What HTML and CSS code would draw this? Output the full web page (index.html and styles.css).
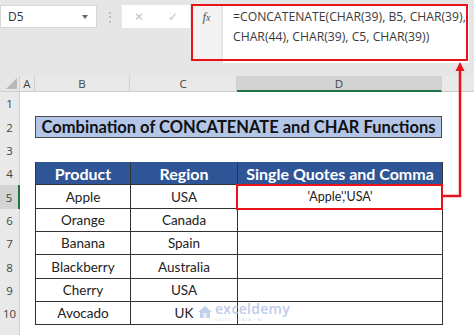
FILE: index.html
```html
<!DOCTYPE html>
<html lang="en">
<head>
    <meta charset="UTF-8">
    <title>CONCATENATE and CHAR</title>
    <link rel="stylesheet" href="styles.css">
</head>
<body>
    <div class="app">
        <div class="topbar">
            <div class="namebox">
                <span>D5</span>
                <span class="caret"></span>
            </div>
            <div class="grip">&#8942;</div>
            <div class="actions">
                <span class="act">&#10005;</span>
                <span class="act">&#10003;</span>
            </div>
            <div class="fx"><i>f</i><i class="x">x</i></div>
            <div class="formula">=CONCATENATE(CHAR(39), B5, CHAR(39),<br>CHAR(44), CHAR(39), C5, CHAR(39))</div>
            <div class="callout"></div>
        </div>

        <div class="sheet">
            <div class="corner"><span class="tri"></span></div>
            <div class="colhead">A</div>
            <div class="colhead">B</div>
            <div class="colhead">C</div>
            <div class="colhead sel">D</div>
            <div class="colhead last"></div>

            <div class="rowhead">1</div>
            <div class="blank span5"></div>

            <div class="rowhead">2</div>
            <div class="blank"></div>
            <div class="title">Combination of CONCATENATE and CHAR Functions</div>
            <div class="blank"></div>

            <div class="rowhead">3</div>
            <div class="blank span5"></div>

            <div class="rowhead">4</div>
            <div class="blank"></div>
            <div class="th">Product</div>
            <div class="th">Region</div>
            <div class="th">Single Quotes and Comma</div>
            <div class="blank"></div>

            <div class="rowhead sel">5</div>
            <div class="blank"></div>
            <div class="td">Apple</div>
            <div class="td">USA</div>
            <div class="td active">'Apple','USA'</div>
            <div class="blank"></div>

            <div class="rowhead">6</div>
            <div class="blank"></div>
            <div class="td">Orange</div>
            <div class="td">Canada</div>
            <div class="td"></div>
            <div class="blank"></div>

            <div class="rowhead">7</div>
            <div class="blank"></div>
            <div class="td">Banana</div>
            <div class="td">Spain</div>
            <div class="td"></div>
            <div class="blank"></div>

            <div class="rowhead">8</div>
            <div class="blank"></div>
            <div class="td">Blackberry</div>
            <div class="td">Australia</div>
            <div class="td"></div>
            <div class="blank"></div>

            <div class="rowhead">9</div>
            <div class="blank"></div>
            <div class="td">Cherry</div>
            <div class="td">USA</div>
            <div class="td"></div>
            <div class="blank"></div>

            <div class="rowhead">10</div>
            <div class="blank"></div>
            <div class="td">Avocado</div>
            <div class="td">UK</div>
            <div class="td"></div>
            <div class="blank"></div>

            <div class="rowhead"></div>
            <div class="blank span5"></div>
        </div>

        <svg class="arrow" width="474" height="335" viewBox="0 0 474 335">
            <polyline points="460,70 460,196 442,196" fill="none" stroke="#e8121a" stroke-width="2.5"/>
            <polygon points="460,62 455.5,71 464.5,71" fill="#e8121a"/>
        </svg>

        <div class="watermark">
            <svg width="16" height="14" viewBox="0 0 16 14">
                <path d="M1 7 L8 1 L15 7 L13 7 L13 13 L3 13 L3 7 Z" fill="#b9c8e8"/>
                <rect x="6" y="8" width="4" height="5" fill="#dfe7f5"/>
            </svg>
            <div class="wm-text">
                <span class="wm-name">exceldemy</span>
                <span class="wm-tag">EXCEL · DATA · BI</span>
            </div>
        </div>
    </div>
</body>
</html>
```

FILE: styles.css
```css
body {
    margin: 0;
    padding: 0;
    background: #ffffff;
    font-family: Lato, "Open Sans", sans-serif;
    overflow: hidden;
}
.app {
    width: 474px;
    height: 335px;
    position: relative;
    overflow: hidden;
}
.topbar {
    height: 76px;
    background: #e6e6e6;
    display: flex;
    align-items: flex-start;
    padding-top: 5px;
    box-sizing: border-box;
    position: relative;
}
.namebox {
    width: 97px;
    height: 23px;
    background: #ffffff;
    border: 1px solid #d6d6d6;
    box-sizing: border-box;
    display: flex;
    align-items: center;
    justify-content: space-between;
    padding: 0 8px 0 7px;
    font-family: "Open Sans", sans-serif;
    font-size: 12px;
    color: #333;
}
.caret {
    width: 0;
    height: 0;
    border-left: 3.5px solid transparent;
    border-right: 3.5px solid transparent;
    border-top: 4px solid #666;
}
.grip {
    width: 25px;
    text-align: center;
    color: #a9a9a9;
    font-size: 12px;
    line-height: 23px;
}
.actions {
    width: 68px;
    height: 23px;
    background: #ffffff;
    display: flex;
    align-items: center;
    justify-content: space-around;
    color: #c4c4c4;
    font-size: 12px;
}
.fx {
    margin-left: 2px;
    width: 29px;
    height: 56px;
    background: #f3f3f3;
    font-family: "Liberation Serif", serif;
    font-size: 13px;
    color: #555;
    text-align: center;
    padding-top: 4px;
    box-sizing: border-box;
}
.fx .x {
    font-size: 10px;
}
.formula {
    margin-left: 2px;
    flex: 1;
    margin-right: 5px;
    height: 58px;
    background: #ffffff;
    font-family: "Open Sans", sans-serif;
    font-size: 12.2px;
    line-height: 20px;
    color: #3b3b3b;
    padding: 2px 0 0 10px;
    box-sizing: border-box;
    white-space: nowrap;
}
.callout {
    position: absolute;
    left: 191px;
    top: 4px;
    width: 277px;
    height: 57px;
    border: 2.5px solid #e8121a;
    box-sizing: border-box;
}
.sheet {
    display: grid;
    grid-template-columns: 20px 15px 95px 107px 205px 1fr;
    grid-template-rows: 16px repeat(10, 23.35px) 1fr;
    height: 259px;
    font-family: Lato, "Open Sans", sans-serif;
}
.corner {
    background: #e6e6e6;
    border-right: 1px solid #cfcfcf;
    border-bottom: 1px solid #cfcfcf;
    position: relative;
}
.tri {
    position: absolute;
    right: 2px;
    bottom: 2px;
    width: 0;
    height: 0;
    border-left: 11px solid transparent;
    border-bottom: 11px solid #b8b8b8;
}
.colhead {
    background: #e9e9e9;
    border-right: 1px solid #cfcfcf;
    border-bottom: 1px solid #cfcfcf;
    font-family: "Open Sans", sans-serif;
    font-size: 11.5px;
    color: #444;
    display: flex;
    align-items: center;
    justify-content: center;
}
.colhead.sel {
    background: #d3d3d3;
    border-bottom: 2px solid #217346;
}
.colhead.last {
    border-right: none;
}
.rowhead {
    background: #e9e9e9;
    border-right: 1px solid #cfcfcf;
    font-family: "Open Sans", sans-serif;
    font-size: 11.5px;
    color: #444;
    display: flex;
    align-items: center;
    justify-content: center;
}
.rowhead.sel {
    background: #d3d3d3;
    border-right: 2px solid #217346;
}
.blank {
    background: #ffffff;
}
.span5 {
    grid-column: span 5;
}
.title {
    grid-column: span 3;
    margin: 0.5px 0 0.5px 0;
    background: #b4c6e7;
    border: 1px solid #4a4a4a;
    font-weight: 700;
    font-size: 16.5px;
    color: #111;
    display: flex;
    align-items: center;
    justify-content: center;
    white-space: nowrap;
}
.th {
    background: #2f5597;
    color: #ffffff;
    font-weight: 700;
    font-size: 16px;
    display: flex;
    align-items: center;
    justify-content: center;
    border-left: 1px solid #333;
    border-bottom: 1px solid #333;
    white-space: nowrap;
}
.th:nth-of-type(n) + .blank {
    border-left: 1px solid #333;
}
.td {
    background: #ffffff;
    color: #222;
    font-size: 13.5px;
    display: flex;
    align-items: center;
    justify-content: center;
    border-left: 1px solid #333;
    border-bottom: 1px solid #333;
}
.td + .blank {
    border-left: 1px solid #333;
}
.td.active {
    outline: 2.5px solid #e8121a;
    outline-offset: -1px;
    font-size: 12.5px;
    position: relative;
}
.arrow {
    position: absolute;
    left: 0;
    top: 0;
    pointer-events: none;
}
.watermark {
    position: absolute;
    left: 197px;
    top: 302px;
    display: flex;
    align-items: center;
    gap: 2px;
    opacity: 0.85;
}
.wm-text {
    display: flex;
    flex-direction: column;
    gap: 1px;
    line-height: 1.1;
}
.wm-name {
    font-family: "Open Sans", sans-serif;
    font-size: 14px;
    line-height: 14px;
    font-weight: 600;
    color: #b3c3e6;
    letter-spacing: 0.3px;
}
.wm-tag {
    font-family: "Open Sans", sans-serif;
    font-size: 4px;
    line-height: 5px;
    color: #c2cbe0;
    letter-spacing: 1px;
}
```
